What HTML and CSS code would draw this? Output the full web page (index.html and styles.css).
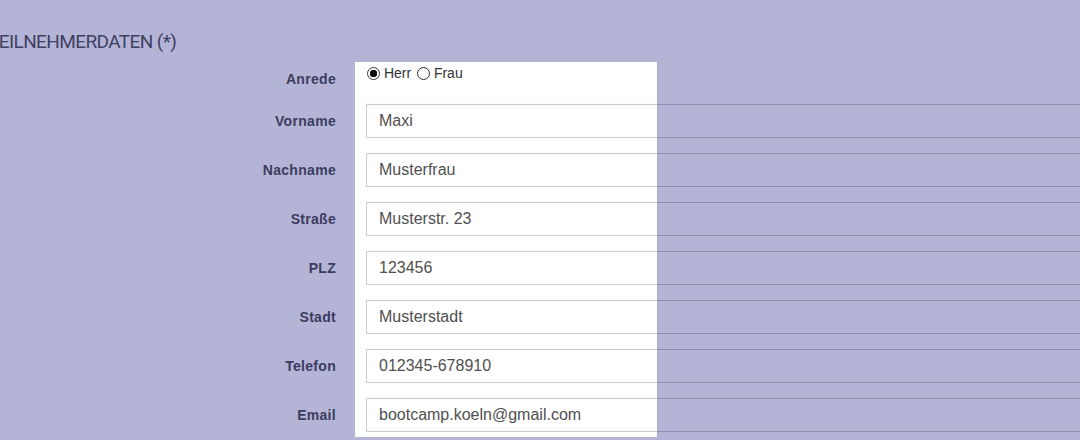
FILE: index.html
```html
<!DOCTYPE html>
<html lang="de">
<head>
  <meta charset="UTF-8" />
  <meta name="viewport" content="width=device-width, initial-scale=1" />
  <title>Teilnehmerdaten</title>
  <link rel="stylesheet" href="styles.css">
</head>
<body>
  <section class="participant">
    <h2 class="section-title">TEILNEHMERDATEN (*)</h2>
    <form class="data-form">
      <span class="field-label">Anrede</span>
      <div class="field radios">
        <label><input type="radio" name="anrede" value="herr" checked> Herr</label>
        <label><input type="radio" name="anrede" value="frau"> Frau</label>
      </div>

      <label class="field-label" for="vorname">Vorname</label>
      <div class="field"><input id="vorname" type="text" value="Maxi"></div>

      <label class="field-label" for="nachname">Nachname</label>
      <div class="field"><input id="nachname" type="text" value="Musterfrau"></div>

      <label class="field-label" for="strasse">Straße</label>
      <div class="field"><input id="strasse" type="text" value="Musterstr. 23"></div>

      <label class="field-label" for="plz">PLZ</label>
      <div class="field"><input id="plz" type="text" value="123456"></div>

      <label class="field-label" for="stadt">Stadt</label>
      <div class="field"><input id="stadt" type="text" value="Musterstadt"></div>

      <label class="field-label" for="telefon">Telefon</label>
      <div class="field"><input id="telefon" type="text" value="012345-678910"></div>

      <label class="field-label" for="email">Email</label>
      <div class="field last"><input id="email" type="email" value="bootcamp.koeln@gmail.com"></div>
    </form>
  </section>
</body>
</html>
```

FILE: styles.css
```css
/* RESET & BASE */
* { box-sizing: border-box; margin: 0; padding: 0; }
html, body { overflow: hidden; }
body {
  font-family: "Liberation Sans", Arial, sans-serif;
  background: #b4b5d6;
  color: #3c3c60;
}

/* heading is cut off on the left, like the page it came from */
.section-title {
  font-family: Roboto, "Liberation Sans", sans-serif;
  font-weight: 400;
  font-size: 19px;
  line-height: 24px;
  letter-spacing: -0.6px;
  color: #3f3f63;
  padding-top: 30px;
  margin: 0 0 8px -12px;
}

.data-form {
  display: grid;
  grid-template-columns: 336px 302px;
  column-gap: 19px;
}

.field-label {
  text-align: right;
  font-size: 14px;
  font-weight: bold;
  line-height: 34px;
  letter-spacing: 0.3px;
  color: #3c3c60;
  align-self: start;
}

.field {
  background: #fff;
  padding: 0 0 15px 11px;
  box-shadow: 1px 0 2px rgba(0,0,0,0.05);
}
.field.last { padding-bottom: 5px; }

.field input[type="text"],
.field input[type="email"] {
  display: block;
  width: 800px;
  height: 34px;
  padding: 0 12px;
  border: 1px solid rgba(0,0,0,0.2);
  background: transparent;
  font-family: "Liberation Sans", Arial, sans-serif;
  font-size: 16px;
  color: #505050;
  outline: none;
}

.radios {
  height: 42px;
  padding-top: 3px;
  padding-bottom: 0;
  font-size: 14px;
  line-height: 16px;
  color: #333;
}
.radios label { margin-right: 1px; }
.radios input {
  appearance: none;
  -webkit-appearance: none;
  width: 13px;
  height: 13px;
  border: 1px solid #333;
  border-radius: 50%;
  background: #fff;
  margin: 0 0 0 1px;
  vertical-align: -2px;
}
.radios input:checked {
  background: radial-gradient(circle, #111 0 3.5px, #fff 4px);
}
```
